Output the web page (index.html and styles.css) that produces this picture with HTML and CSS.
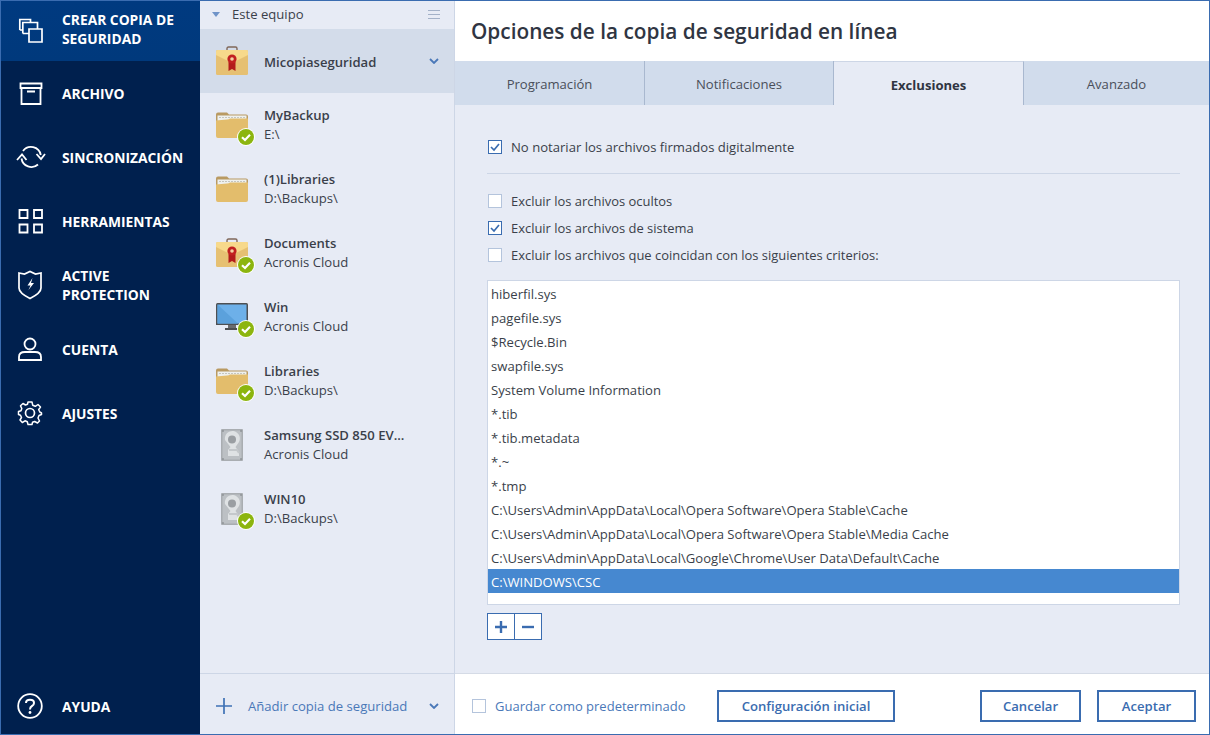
FILE: index.html
```html
<!DOCTYPE html>
<html lang="es">
<head>
<meta charset="utf-8">
<title>Opciones de la copia de seguridad en línea</title>
<link rel="stylesheet" href="styles.css">
</head>
<body>
<svg class="defs" width="0" height="0" aria-hidden="true">
  <defs>
    <symbol id="folder" viewBox="0 0 32 28">
      <path d="M0 3.500Q0 1.500 2 1.500H11L13 3.500H30Q32 3.500 32 5.500V12H0Z" fill="#b99a62"/>
      <rect x="1.500" y="4.500" width="29" height="10" fill="#eef0ee"/>
      <path d="M3 6.500H29" stroke="#c5c5bd" stroke-width="1.200" stroke-dasharray="2 1"/>
      <path d="M0 9.500L11 8.500Q13 8.500 14 7.500H32V25Q32 27 30 27H2Q0 27 0 25Z" fill="#e3bd6c"/>
    </symbol>
    <symbol id="case" viewBox="0 0 32 30">
      <path d="M11 6V2.500Q11 1 12.500 1H19.500Q21 1 21 2.500V6" fill="none" stroke="#80685a" stroke-width="1.400"/>
      <rect x="0" y="4" width="32" height="25" rx="1.500" fill="#e6c072"/>
      <path d="M0 5.500Q0 4 1.500 4H30.500Q32 4 32 5.500V9L16 17L0 9Z" fill="#f7d98b"/>
      <path d="M12.500 16V25L16 23L19.500 25V16Z" fill="#b31b1b"/>
      <circle cx="16" cy="13" r="4.600" fill="#c12020"/>
      <circle cx="16" cy="13" r="1.800" fill="#f3cfa0"/>
    </symbol>
    <symbol id="monitor" viewBox="0 0 32 30">
      <path d="M1.500 1H30.500Q32 1 32 2.500V23H0V2.500Q0 1 1.500 1Z" fill="#4d4f52"/>
      <rect x="1.500" y="2.500" width="29" height="19" fill="#6db0e9"/>
      <path d="M1.500 2.500L22 21.500H1.500Z" fill="#5ba1dc"/>
      <rect x="12" y="23" width="8" height="3" fill="#6a6c6f"/>
      <rect x="9" y="26" width="14" height="2" fill="#4d4f52"/>
    </symbol>
    <symbol id="hdd" viewBox="0 0 32 32">
      <rect x="5" y="0" width="22" height="32" rx="1" fill="#a9adb1"/>
      <rect x="6.500" y="1.500" width="19" height="29" fill="#bcc0c4"/>
      <path d="M9 11A7.500 7.500 0 1 1 23 13L19.500 18L23 23V27H12V21L14.500 18Z" fill="#dfe2e4"/>
      <circle cx="16" cy="10.500" r="4" fill="#9a9ea2"/>
      <path d="M13 21H21L23 24" fill="none" stroke="#c4c8cb" stroke-width="2"/>
      <g fill="#777b7f"><circle cx="7" cy="2" r=".8"/><circle cx="25" cy="2" r=".8"/><circle cx="7" cy="30" r=".8"/><circle cx="25" cy="30" r=".8"/></g>
    </symbol>
    <symbol id="ok" viewBox="0 0 18 18">
      <circle cx="9" cy="9" r="9" fill="#fff"/>
      <circle cx="9" cy="9" r="8" fill="#8cb50f"/>
      <path d="M5 9.200L8 12L13 6.800" fill="none" stroke="#fff" stroke-width="2.200"/>
    </symbol>
    <symbol id="tick" viewBox="0 0 14 14">
      <rect x=".5" y=".5" width="13" height="13" fill="#fff" stroke="#3a6cb0"/>
      <path d="M3 7L6 10L11 4" fill="none" stroke="#3a6cb0" stroke-width="1.700"/>
    </symbol>
  </defs>
</svg>

<div class="window">
  <nav class="nav">
    <a class="nav-item nav-first nav-double">
      <svg class="nav-icon" viewBox="0 0 24 24"><path d="M1.800 12V1.500H12.500V4.500M1.800 12H4.800M4.800 15.500V4.500H19.500V10.500M4.800 15.500H10.500M11 11H24V24H11Z" fill="none" stroke="#fff" stroke-width="1.700"/></svg>
      <span>CREAR COPIA DE<br>SEGURIDAD</span>
    </a>
    <a class="nav-item">
      <svg class="nav-icon" viewBox="0 0 24 24"><path d="M2.500 2.500H23.500V7H2.500ZM3.500 7V23H22.500V7M9 10.500H17" fill="none" stroke="#fff" stroke-width="1.800"/></svg>
      <span>ARCHIVO</span>
    </a>
    <a class="nav-item">
      <svg class="nav-icon nav-icon-wide" viewBox="0 0 28 24"><path d="M6 6A10 10 0 0 1 23.800 10M4.500 13.500A10 10 0 0 0 21 19.500M19.500 9L24 14L28 9M0 15L5 9.500L9.500 15" fill="none" stroke="#fff" stroke-width="1.800"/></svg>
      <span>SINCRONIZACIÓN</span>
    </a>
    <a class="nav-item">
      <svg class="nav-icon" viewBox="0 0 24 24"><path d="M1.500 1H9.500V9H1.500ZM16 1H24V9H16ZM1.500 15.500H9.500V23.500H1.500ZM16 15.500H24V23.500H16Z" fill="none" stroke="#fff" stroke-width="1.800"/></svg>
      <span>HERRAMIENTAS</span>
    </a>
    <a class="nav-item nav-double">
      <svg class="nav-icon nav-icon-tall" viewBox="0 0 24 30"><path d="M1 3L6.500 4L12 1.500L17.500 4L23 3V18Q23 23 12 28.500Q1 23 1 18Z" fill="none" stroke="#fff" stroke-width="1.700"/><path d="M14.500 8L9.500 15.500H12.500L10.500 20L16 13H13Z" fill="#fff"/></svg>
      <span>ACTIVE<br>PROTECTION</span>
    </a>
    <a class="nav-item">
      <svg class="nav-icon" viewBox="0 0 24 24"><circle cx="12" cy="7" r="5.500" fill="none" stroke="#fff" stroke-width="1.800"/><path d="M1 23V20Q1 15 7 15H17Q23 15 23 20V23Z" fill="none" stroke="#fff" stroke-width="1.800"/></svg>
      <span>CUENTA</span>
    </a>
    <a class="nav-item">
      <svg class="nav-icon" viewBox="0 0 24 24"><circle cx="12" cy="12" r="4.500" fill="none" stroke="#fff" stroke-width="1.700"/><path d="M10 1H14L14.700 4.200L17.300 5.300L20 3.500L22.500 6L20.700 8.700L21.800 11L23.500 12V13.500L21 14.500L20 17L21.500 20L19.500 22L16.700 20.500L14.500 21.300L14 23.500H10L9.300 20.800L7 19.800L4.300 21.500L2 19L3.500 16.500L2.500 14.200L.500 13.500V10.500L3 9.700L3.800 7.500L2.500 4.800L5 2.500L7.500 4L9.500 3.300Z" fill="none" stroke="#fff" stroke-width="1.500" stroke-linejoin="round"/></svg>
      <span>AJUSTES</span>
    </a>
    <a class="nav-item nav-help">
      <svg class="nav-icon nav-icon-help" viewBox="0 0 26 26"><circle cx="13" cy="13" r="11.800" fill="none" stroke="#fff" stroke-width="1.800"/><path d="M9 10Q9 6.800 13 6.800Q17 6.800 17 10Q17 12 15 13T13 16.500" fill="none" stroke="#fff" stroke-width="2"/><circle cx="13" cy="19.500" r="1.400" fill="#fff"/></svg>
      <span>AYUDA</span>
    </a>
  </nav>

  <aside class="panel">
    <header class="panel-head">
      <span class="tri"></span>
      <span class="panel-title">Este equipo</span>
      <span class="burger"><i></i><i></i><i></i></span>
    </header>
    <ul class="backups">
      <li class="backup selected">
        <span class="b-icon"><svg class="i-main"><use href="#case"/></svg></span>
        <span class="b-text"><b>Micopiaseguridad</b></span>
        <svg class="chev" viewBox="0 0 10 6"><path d="M1 1L5 5L9 1" fill="none" stroke="#4a78b8" stroke-width="1.800"/></svg>
      </li>
      <li class="backup">
        <span class="b-icon"><svg class="i-main"><use href="#folder"/></svg><svg class="badge"><use href="#ok"/></svg></span>
        <span class="b-text"><b>MyBackup</b><small>E:\</small></span>
      </li>
      <li class="backup">
        <span class="b-icon"><svg class="i-main"><use href="#folder"/></svg></span>
        <span class="b-text"><b>(1)Libraries</b><small>D:\Backups\</small></span>
      </li>
      <li class="backup">
        <span class="b-icon"><svg class="i-main"><use href="#case"/></svg><svg class="badge"><use href="#ok"/></svg></span>
        <span class="b-text"><b>Documents</b><small>Acronis Cloud</small></span>
      </li>
      <li class="backup">
        <span class="b-icon"><svg class="i-main"><use href="#monitor"/></svg><svg class="badge"><use href="#ok"/></svg></span>
        <span class="b-text"><b>Win</b><small>Acronis Cloud</small></span>
      </li>
      <li class="backup">
        <span class="b-icon"><svg class="i-main"><use href="#folder"/></svg><svg class="badge"><use href="#ok"/></svg></span>
        <span class="b-text"><b>Libraries</b><small>D:\Backups\</small></span>
      </li>
      <li class="backup">
        <span class="b-icon"><svg class="i-main"><use href="#hdd"/></svg></span>
        <span class="b-text"><b>Samsung SSD 850 EV...</b><small>Acronis Cloud</small></span>
      </li>
      <li class="backup">
        <span class="b-icon"><svg class="i-main"><use href="#hdd"/></svg><svg class="badge"><use href="#ok"/></svg></span>
        <span class="b-text"><b>WIN10</b><small>D:\Backups\</small></span>
      </li>
    </ul>
    <footer class="panel-foot">
      <svg class="plus" viewBox="0 0 16 16"><path d="M8 0V16M0 8H16" stroke="#3f72b5" stroke-width="1.700"/></svg>
      <span class="add">Añadir copia de seguridad</span>
      <svg class="chev" viewBox="0 0 10 6"><path d="M1 1L5 5L9 1" fill="none" stroke="#4a78b8" stroke-width="1.800"/></svg>
    </footer>
  </aside>

  <main class="main">
    <h1 class="title">Opciones de la copia de seguridad en línea</h1>
    <div class="tabs">
      <div class="tab">Programación</div>
      <div class="tab tab-mid">Notificaciones</div>
      <div class="tab active">Exclusiones</div>
      <div class="tab last">Avanzado</div>
    </div>
    <section class="content">
      <label class="check first"><svg class="box"><use href="#tick"/></svg>No notariar los archivos firmados digitalmente</label>
      <hr class="rule">
      <label class="check"><span class="box empty"></span>Excluir los archivos ocultos</label>
      <label class="check"><svg class="box"><use href="#tick"/></svg>Excluir los archivos de sistema</label>
      <label class="check"><span class="box empty"></span>Excluir los archivos que coincidan con los siguientes criterios:</label>
      <ul class="list">
        <li>hiberfil.sys</li>
        <li>pagefile.sys</li>
        <li>$Recycle.Bin</li>
        <li>swapfile.sys</li>
        <li>System Volume Information</li>
        <li>*.tib</li>
        <li>*.tib.metadata</li>
        <li>*.~</li>
        <li>*.tmp</li>
        <li>C:\Users\Admin\AppData\Local\Opera Software\Opera Stable\Cache</li>
        <li>C:\Users\Admin\AppData\Local\Opera Software\Opera Stable\Media Cache</li>
        <li>C:\Users\Admin\AppData\Local\Google\Chrome\User Data\Default\Cache</li>
        <li class="sel">C:\WINDOWS\CSC</li>
      </ul>
      <div class="pm">
        <span class="pm-btn"><svg viewBox="0 0 14 14"><path d="M7 1V13M1 7H13" stroke="#3a6cb0" stroke-width="2.400"/></svg></span>
        <span class="pm-btn"><svg viewBox="0 0 14 14"><path d="M1 7H13" stroke="#3a6cb0" stroke-width="2.400"/></svg></span>
      </div>
    </section>
    <footer class="foot">
      <label class="save"><span class="box empty"></span>Guardar como predeterminado</label>
      <button class="btn btn-config">Configuración inicial</button>
      <button class="btn btn-cancel">Cancelar</button>
      <button class="btn btn-ok">Aceptar</button>
    </footer>
  </main>
</div>
</body>
</html>
```

FILE: styles.css
```css
* { box-sizing: border-box; }
html, body { margin: 0; padding: 0; height: 100%; overflow: hidden; }
body { font-family: "Open Sans", "Noto Sans", sans-serif; font-size: 13.1px; color: #3a3f4a; }
.defs { display: block; height: 0; }
ul { list-style: none; margin: 0; padding: 0; }

.window { width: 1210px; height: 735px; display: flex; border: 1px solid #3a6cb0; background: #fff; }

.nav { width: 199px; flex: none; background: #00204e; display: flex; flex-direction: column; color: #fff; font-weight: 700; font-size: 13.8px; line-height: 19px; }
.nav-item { height: 64px; display: flex; align-items: center; padding-left: 17px; }
.nav-item span { display: block; padding-top: 1px; }
.nav-item.nav-double span { padding-top: 0; margin-top: -1px; }
.nav-icon { width: 24px; height: 24px; margin-right: 20px; flex: none; overflow: visible; }
.nav-icon-wide { width: 28px; margin-left: -1px; margin-right: 17px; }
.nav-icon-tall { height: 30px; }
.nav-icon-help { width: 26px; height: 26px; margin-left: -1px; margin-right: 19px; }
.nav-first { height: 60px; padding-bottom: 3px; background: linear-gradient(#003a80, #00397c); }
.nav-help { margin-top: auto; height: 56px; }

.panel { width: 255px; flex: none; background: #e7ebf5; border-right: 1px solid #cdd6e6; display: flex; flex-direction: column; }
.panel-head { height: 28px; display: flex; align-items: center; padding: 0 14px 2px 12px; }
.tri { width: 0; height: 0; border-left: 4.500px solid transparent; border-right: 4.500px solid transparent; border-top: 5px solid #6f93c8; margin-right: 12px; }
.panel-title { flex: 1; color: #3a3f4a; font-weight: 500; font-size: 13.1px; }
.burger { display: flex; flex-direction: column; gap: 3px; width: 12px; }
.burger i { display: block; height: 1px; background: #a3b1c8; }

.backups { flex: 1; }
.backup { height: 64px; display: flex; align-items: center; padding: 0 16px 0 16px; }
.backup.selected { background: #d3dcea; }
.backup.selected .b-text { padding-top: 2px; }
.b-icon { position: relative; width: 32px; height: 32px; margin-right: 16px; flex: none; }
.i-main { width: 32px; height: 32px; display: block; }
.badge { position: absolute; left: 21px; top: 19px; width: 18px; height: 18px; }
.b-text { flex: 1; min-width: 0; white-space: nowrap; line-height: 19px; }
.b-text b { display: block; font-weight: 600; color: #3a3f4a; }
.b-text small { display: block; font-size: 13.1px; color: #3a3f4a; }
.chev { width: 10px; height: 6px; flex: none; margin-right: -1px; }

.panel-foot { height: 61px; border-top: 1px solid #cdd6e6; display: flex; align-items: center; padding: 4px 16px 0 16px; }
.plus { width: 16px; height: 16px; margin-right: 16px; flex: none; }
.add { flex: 1; color: #4a78b8; }

.main { flex: 1; min-width: 0; display: flex; flex-direction: column; }
.title { margin: 0; height: 60px; display: flex; align-items: center; padding-left: 16px; font-size: 20.8px; font-weight: 600; color: #2f3542; }
.tabs { height: 44px; display: flex; background: #d1dcec; }
.tab { width: 190px; flex: none; display: flex; align-items: center; justify-content: center; border-right: 1px solid #a9b8cf; color: #4a4f5a; padding-top: 2px; }
.tab-mid { width: 189px; }
.tab.active { background: #e7ebf5; font-weight: 700; color: #2f3542; border-top: 1px solid #cdd6e6; }
.tab.last { flex: 1; border-right: 0; }

.content { flex: 1; background: #e7ebf5; padding: 32px 29px 0 32px; }
.check { display: flex; align-items: center; height: 27px; padding-left: 1px; font-size: 12.95px; }
.check.first { height: 19px; font-size: 13.1px; }
.box { width: 14px; height: 14px; margin-right: 9px; flex: none; display: block; }
.box.empty { background: #fff; border: 1px solid #b4c4dc; }
.rule { height: 1px; border: 0; background: #cdd6e6; margin: 17px 0 13px; }
.list { margin-top: 12px; height: 325px; background: #fff; border: 1px solid #cdd6e6; }
.list li { height: 24px; line-height: 26px; padding-left: 3px; color: #3a3f4a; white-space: nowrap; }
.list .sel { background: #4688d0; color: #fff; }
.pm { display: flex; margin-top: 8px; width: 55px; height: 27px; border: 1px solid #3a6cb0; background: #fff; }
.pm-btn { flex: 1; display: flex; align-items: center; justify-content: center; }
.pm-btn + .pm-btn { border-left: 1px solid #3a6cb0; }
.pm-btn svg { width: 14px; height: 14px; }

.foot { height: 61px; flex: none; border-top: 1px solid #d5dbe6; display: flex; align-items: center; padding: 3px 13px 0 17px; }
.save { display: flex; align-items: center; color: #4a78b8; white-space: nowrap; width: 245px; flex: none; font-size: 13px; }
.btn { font: 600 13.1px "Open Sans", "Noto Sans", sans-serif; height: 32px; border: 2px solid #3a6cb0; background: #fff; color: #3a6cb0; padding: 0; flex: none; }
.btn-config { width: 178px; margin-right: 85px; }
.btn-cancel { width: 101px; margin-right: 16px; }
.btn-ok { width: 99px; }
```
